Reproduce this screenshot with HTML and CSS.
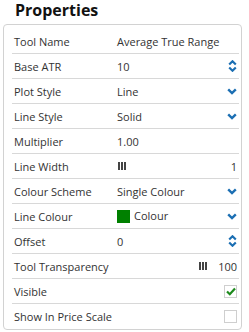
FILE: index.html
```html
<!DOCTYPE html>
<html>
<head>
	<title>Properties</title>
	<link rel="stylesheet" href="styles.css">
</head>
<body>
<h1 class="title">Properties</h1>
<div class="panel">
	<div class="row"><span class="label">Tool Name</span><span class="value">Average True Range</span></div>
	<div class="row"><span class="label">Base ATR</span><span class="value">10</span>
		<svg class="icon" width="9" height="12" viewBox="0 0 9 12"><path d="M1.2 4.5 L4.5 1.3 L7.8 4.5 M1.2 7.5 L4.5 10.7 L7.8 7.5" fill="none" stroke="#1c6fb3" stroke-width="2.2"/></svg></div>
	<div class="row"><span class="label">Plot Style</span><span class="value">Line</span>
		<svg class="icon" width="10" height="7" viewBox="0 0 10 7"><path d="M1.2 1.3 L5 5 L8.8 1.3" fill="none" stroke="#1c6fb3" stroke-width="2.4"/></svg></div>
	<div class="row"><span class="label">Line Style</span><span class="value">Solid</span>
		<svg class="icon" width="10" height="7" viewBox="0 0 10 7"><path d="M1.2 1.3 L5 5 L8.8 1.3" fill="none" stroke="#1c6fb3" stroke-width="2.4"/></svg></div>
	<div class="row"><span class="label">Multiplier</span><span class="value">1.00</span></div>
	<div class="row"><span class="label">Line Width</span><span class="value"><span class="bars"><i></i><i></i><i></i></span></span><span class="num">1</span></div>
	<div class="row"><span class="label">Colour Scheme</span><span class="value">Single Colour</span>
		<svg class="icon" width="10" height="7" viewBox="0 0 10 7"><path d="M1.2 1.3 L5 5 L8.8 1.3" fill="none" stroke="#1c6fb3" stroke-width="2.4"/></svg></div>
	<div class="row"><span class="label">Line Colour</span><span class="value"><span class="swatch"></span><span class="swatch-text">Colour</span></span>
		<svg class="icon" width="10" height="7" viewBox="0 0 10 7"><path d="M1.2 1.3 L5 5 L8.8 1.3" fill="none" stroke="#1c6fb3" stroke-width="2.4"/></svg></div>
	<div class="row"><span class="label">Offset</span><span class="value">0</span>
		<svg class="icon" width="9" height="12" viewBox="0 0 9 12"><path d="M1.2 4.5 L4.5 1.3 L7.8 4.5 M1.2 7.5 L4.5 10.7 L7.8 7.5" fill="none" stroke="#1c6fb3" stroke-width="2.2"/></svg></div>
	<div class="row"><span class="label wide">Tool Transparency</span><span class="bars"><i></i><i></i><i></i></span><span class="num">100</span></div>
	<div class="row"><span class="label wide">Visible</span><span class="check">
		<svg width="10" height="9" viewBox="0 0 10 9"><path d="M1 4.5 L3.8 7.2 L9 1.5" fill="none" stroke="#1d8a1d" stroke-width="2.2"/></svg></span></div>
	<div class="row last"><span class="label wide">Show In Price Scale</span><span class="check"></span></div>
</div>
</body>
</html>
```

FILE: styles.css
```css
body {
	margin: 0;
	font-family: "Open Sans", "Liberation Sans", sans-serif;
	color: #333;
	background: #fff;
}

.title {
	margin: 0;
	padding: 0 0 0 15px;
	font-size: 16px;
	line-height: 20px;
	font-weight: bold;
	color: #111;
}

.panel {
	margin: 4px 7px 0 3px;
	border: 1px solid #d2d2d2;
	border-radius: 4px;
	padding: 4px 2px 0 8px;
	height: 300px;
}

.row {
	display: flex;
	align-items: center;
	height: 25px;
	box-sizing: border-box;
	border-bottom: 1px solid #d8d8d8;
	font-size: 11px;
	padding: 0 2px;
}

.row.last {
	border-bottom: none;
}

.label {
	width: 103px;
	flex: none;
}

.label.wide {
	flex: 1;
	width: auto;
}

.value {
	flex: 1;
	display: flex;
	align-items: center;
}

.icon {
	flex: none;
}

.bars {
	display: flex;
	gap: 1px;
	margin-left: 1px;
}

.bars i {
	display: block;
	width: 2px;
	height: 8px;
	background: #444;
}

.num {
	margin-left: 11px;
}

.swatch {
	width: 13px;
	height: 13px;
	background: #008000;
	margin-right: 4px;
}

.swatch-text {
	position: relative;
	top: -1px;
}

.check {
	flex: none;
	width: 11px;
	height: 11px;
	border: 1px solid #cfcfcf;
	display: flex;
	align-items: center;
	justify-content: center;
}
```
